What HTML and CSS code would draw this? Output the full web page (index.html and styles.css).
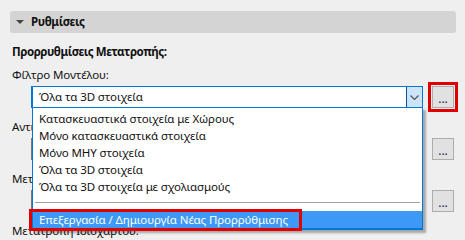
FILE: index.html
```html
<!DOCTYPE html>
<html lang="el">
<head>
    <meta charset="UTF-8">
    <meta name="viewport" content="width=device-width, initial-scale=1.0">
    <title>Ρυθμίσεις</title>
    <link rel="stylesheet" href="styles.css">
</head>
<body>
    <div class="panel-head"><span class="caret"></span>Ρυθμίσεις</div>
    <div class="panel-body">
        <div class="group-title">Προρρυθμίσεις Μετατροπής:</div>

        <div class="field-label">Φίλτρο Μοντέλου:</div>
        <div class="field-row">
            <div class="combo open">
                <div class="combo-value">Όλα τα 3D στοιχεία</div>
                <div class="combo-arrow">
                    <svg width="9" height="5" viewBox="0 0 9 5"><path d="M0.5 0.5 L4.5 4.5 L8.5 0.5" fill="none" stroke="#505050" stroke-width="1.1"/></svg>
                </div>
                <ul class="combo-list">
                    <li>Κατασκευαστικά στοιχεία με Χώρους</li>
                    <li>Μόνο κατασκευαστικά στοιχεία</li>
                    <li>Μόνο ΜΗΥ στοιχεία</li>
                    <li>Όλα τα 3D στοιχεία</li>
                    <li>Όλα τα 3D στοιχεία με σχολιασμούς</li>
                    <li class="sep"></li>
                    <li class="active">Επεξεργασία / Δημιουργία Νέας Προρρύθμισης<span class="mark-box"></span></li>
                </ul>
            </div>
            <button class="more marked">...</button>
        </div>

        <div class="field-label">Αντιστοίχιση Τύπων:</div>
        <div class="field-row">
            <div class="combo"></div>
            <button class="more">...</button>
        </div>

        <div class="field-label">Μετατροπή Γεωμετρίας:</div>
        <div class="field-row">
            <div class="combo"></div>
            <button class="more">...</button>
        </div>

        <div class="field-label">Μετατροπή Ιδιοχάρτου:</div>
    </div>
</body>
</html>
```

FILE: styles.css
```css
body {
    margin: 0;
    background: #efefef;
    font-family: 'Noto Sans', 'Open Sans', sans-serif;
    font-size: 11.5px;
    letter-spacing: -0.1px;
    color: #111;
    overflow: hidden;
}

.panel-head {
    margin: 11px 9px 0 10px;
    height: 22px;
    line-height: 22px;
    background: #d4d4d4;
    border-radius: 3px;
    font-weight: bold;
    letter-spacing: -0.4px;
    padding-left: 6px;
    display: flex;
    align-items: center;
}

.caret {
    width: 0;
    height: 0;
    border-left: 4px solid transparent;
    border-right: 4px solid transparent;
    border-top: 4px solid #444;
    margin-right: 7px;
}

.panel-body {
    padding-left: 12px;
}

.group-title {
    margin-top: 11px;
    line-height: 16px;
    font-weight: bold;
    letter-spacing: -0.45px;
}

.field-label {
    margin-top: 7px;
    line-height: 16px;
}

.field-row + .field-label {
    margin-top: 11px;
}

.field-row {
    display: flex;
    gap: 9px;
    margin: 3px 11px 0 19px;
}

.combo {
    position: relative;
    flex: 1;
    height: 22px;
    box-sizing: border-box;
    background: #fff;
    border: 1px solid #7a7a7a;
    display: flex;
}

.combo.open {
    border-color: #0078d7;
    border-left-width: 2px;
    z-index: 2;
}

.combo-value {
    flex: 1;
    line-height: 20px;
    padding-left: 6px;
}

.combo-arrow {
    width: 15px;
    background: #cce4f7;
    border-left: 1px solid #005499;
    display: flex;
    align-items: center;
    justify-content: center;
}

.combo-list {
    position: absolute;
    top: 100%;
    left: -1px;
    right: -1px;
    margin: 0;
    padding: 2px 0 0;
    list-style: none;
    background: #fff;
    border: 1px solid #0078d7;
    border-bottom-width: 2px;
    box-shadow: 3px 3px 2px rgba(0, 0, 0, 0.3);
}

.combo-list li {
    height: 17px;
    line-height: 17px;
    padding-left: 6px;
    white-space: nowrap;
}

.combo-list li.sep {
    height: 1px;
    margin: 7px 2px 8px;
    padding: 0;
    background: #a0a0a0;
}

.combo-list li.active {
    position: relative;
    background: #3d99f5;
    color: #fff;
}

.mark-box {
    position: absolute;
    left: -4px;
    top: -2px;
    width: 267px;
    height: 16px;
    border: 3px solid #e00000;
}

.more {
    width: 22px;
    height: 22px;
    padding: 0 0 3px;
    background: #e1e1e1;
    border: 1px solid #adadad;
    font-family: inherit;
    font-size: 12px;
    color: #2a1a4a;
    line-height: 24px;
}

.more.marked {
    outline: 3px solid #e00000;
    outline-offset: 1px;
}
```
